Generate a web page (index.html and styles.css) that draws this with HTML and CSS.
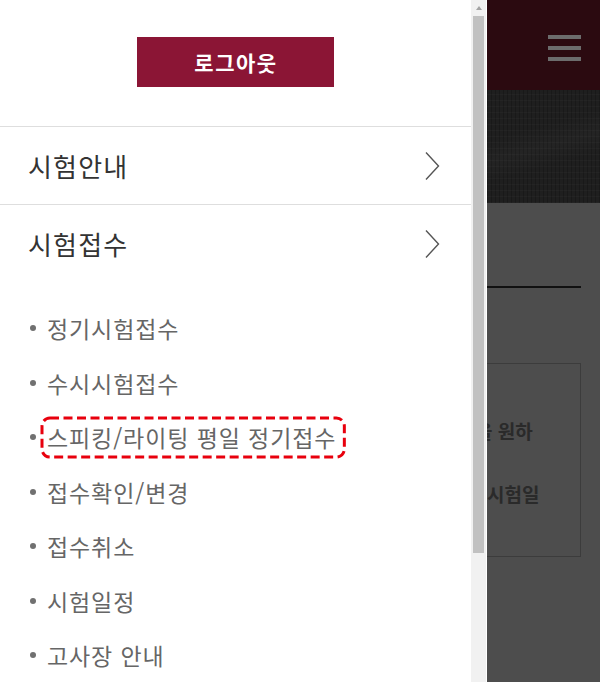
FILE: index.html
```html
<!DOCTYPE html>
<html lang="ko">
<head>
<meta charset="utf-8">
<title>메뉴</title>
<link rel="stylesheet" href="styles.css">
</head>
<body>
<div class="screen">
  <aside class="drawer">
    <div class="drawer-body">
      <div class="account">
        <button class="logout" type="button">로그아웃</button>
      </div>
      <nav>
        <ul class="menu">
          <li class="menu-item">
            <div class="menu-head">
              <span>시험안내</span>
              <svg class="chev" width="15" height="28" viewBox="0 0 15 28"><polyline points="1,0.5 13.5,14 1,27.5" fill="none" stroke="#555" stroke-width="1.4"/></svg>
            </div>
          </li>
          <li class="menu-item open">
            <div class="menu-head">
              <span>시험접수</span>
              <svg class="chev" width="15" height="28" viewBox="0 0 15 28"><polyline points="1,0.5 13.5,14 1,27.5" fill="none" stroke="#555" stroke-width="1.4"/></svg>
            </div>
            <ul class="submenu">
              <li><span>정기시험접수</span></li>
              <li><span>수시시험접수</span></li>
              <li><span class="hl">스피킹/라이팅 평일 정기접수<svg class="hl-frame" aria-hidden="true"><rect x="0" y="0" width="100%" height="100%" rx="8" ry="8" fill="none" stroke="#e8000d" stroke-width="3" stroke-dasharray="9 4.5"/></svg></span></li>
              <li><span>접수확인/변경</span></li>
              <li><span>접수취소</span></li>
              <li><span>시험일정</span></li>
              <li><span>고사장 안내</span></li>
            </ul>
          </li>
        </ul>
      </nav>
    </div>
    <div class="scrollbar">
      <div class="sb-arrow"></div>
      <div class="sb-thumb"></div>
    </div>
  </aside>
  <div class="backdrop">
    <header class="bd-header">
      <span class="burger"><i></i><i></i><i></i></span>
    </header>
    <div class="bd-visual"></div>
    <div class="bd-content">
      <div class="bd-rule"></div>
      <div class="bd-box">
        <p class="bd-line">을 원하</p>
        <p class="bd-line second">시험일</p>
      </div>
    </div>
  </div>
</div>
</body>
</html>
```

FILE: styles.css
```css
html, body {
  margin: 0;
  padding: 0;
  background: #fff;
}

body {
  font-family: "Noto Sans CJK KR", "Noto Sans", sans-serif;
}

.screen {
  display: flex;
  width: 600px;
  height: 682px;
  overflow: hidden;
}

.drawer {
  flex: none;
  display: flex;
  width: 487px;
  padding-right: 1px;
  box-sizing: border-box;
  background: #fff;
}

.drawer-body {
  width: 471px;
  flex: none;
}

.account {
  display: flex;
  justify-content: center;
  padding: 37px 0 39px;
  border-bottom: 1px solid #dedede;
}

.logout {
  width: 197px;
  height: 50px;
  border: 0;
  margin: 0;
  padding: 0 0 0 1px;
  background: #8b1535;
  color: #fff;
  font-family: "Noto Sans CJK KR", sans-serif;
  font-size: 21px;
  font-weight: 700;
  letter-spacing: 1.5px;
}

.menu,
.submenu {
  list-style: none;
  margin: 0;
  padding: 0;
}

.menu-item {
  border-bottom: 1px solid #dedede;
}

.menu-item.open {
  border-bottom: 0;
}

.menu-head {
  display: flex;
  align-items: center;
  justify-content: space-between;
  height: 77px;
  padding: 0 31px 0 28px;
  font-size: 26px;
  letter-spacing: 1.2px;
  color: #333;
}

.chev {
  display: block;
}

.submenu {
  padding-top: 19px;
}

.submenu li {
  display: flex;
  align-items: center;
  height: 54.5px;
  padding-left: 30px;
  font-size: 23px;
  letter-spacing: 0.9px;
  color: #666;
}

.submenu li::before {
  content: "";
  width: 6px;
  height: 6px;
  border-radius: 50%;
  background: #707070;
  margin-right: 11px;
  flex: none;
}

.hl {
  position: relative;
}

.hl-frame {
  position: absolute;
  top: -2.5px;
  bottom: -2.5px;
  left: -5px;
  right: -8px;
  width: calc(100% + 13px);
  height: calc(100% + 5px);
  overflow: visible;
}

.scrollbar {
  width: 15px;
  flex: none;
  display: flex;
  flex-direction: column;
  background: #f1f1f1;
}

.sb-arrow {
  height: 16px;
  display: flex;
  align-items: center;
  justify-content: center;
}

.sb-arrow::before {
  content: "";
  width: 0;
  height: 0;
  border-left: 3.5px solid transparent;
  border-right: 3.5px solid transparent;
  border-bottom: 4px solid #a3a3a3;
}

.sb-thumb {
  height: 537px;
  margin: 0 2px;
  background: #c1c1c1;
}

.backdrop {
  flex: 1;
  display: flex;
  flex-direction: column;
  background: #4d4d4d;
  overflow: hidden;
}

.bd-header {
  height: 90px;
  box-sizing: border-box;
  flex: none;
  display: flex;
  justify-content: flex-end;
  padding: 35px 19px 0 0;
  background: #2b0a10;
}

.burger {
  display: flex;
  flex-direction: column;
  gap: 7.5px;
  width: 33px;
}

.burger i {
  display: block;
  height: 3.5px;
  background: #6c6c6c;
}

.bd-visual {
  height: 113px;
  flex: none;
  background-color: #1f1f1f;
  background-image:
    linear-gradient(165deg, transparent 35%, rgba(255,255,255,0.025) 50%, transparent 65%),
    repeating-linear-gradient(0deg, rgba(255,255,255,0.025) 0 1px, transparent 1px 6px),
    repeating-linear-gradient(90deg, rgba(0,0,0,0.2) 0 1px, transparent 1px 4px);
}

.bd-content {
  padding-right: 19px;
}

.bd-rule {
  margin-top: 83px;
  height: 2px;
  background: #111;
}

.bd-box {
  margin-top: 75px;
  margin-left: -40px;
  height: 194px;
  box-sizing: border-box;
  border: 1px solid #3c3c3c;
  padding: 52px 0 0 27px;
}

.bd-line {
  margin: 0;
  height: 30px;
  line-height: 30px;
  font-size: 19px;
  font-weight: 700;
  color: #2a2a2a;
  white-space: nowrap;
}

.bd-line.second {
  margin-top: 33px;
  margin-left: 12px;
}
```
